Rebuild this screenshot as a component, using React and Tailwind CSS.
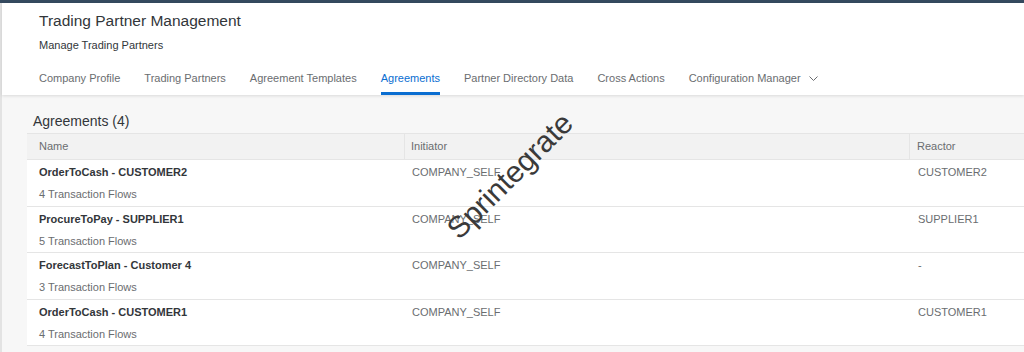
import React from 'react';

const tabs = [
  'Company Profile',
  'Trading Partners',
  'Agreement Templates',
  'Agreements',
  'Partner Directory Data',
  'Cross Actions',
  'Configuration Manager',
];

const agreements = [
  { name: 'OrderToCash - CUSTOMER2', flows: '4 Transaction Flows', initiator: 'COMPANY_SELF', reactor: 'CUSTOMER2' },
  { name: 'ProcureToPay - SUPPLIER1', flows: '5 Transaction Flows', initiator: 'COMPANY_SELF', reactor: 'SUPPLIER1' },
  { name: 'ForecastToPlan - Customer 4', flows: '3 Transaction Flows', initiator: 'COMPANY_SELF', reactor: '-' },
  { name: 'OrderToCash - CUSTOMER1', flows: '4 Transaction Flows', initiator: 'COMPANY_SELF', reactor: 'CUSTOMER1' },
];

function App() {
  return (
    <div className="relative w-[1024px] h-[352px] overflow-hidden bg-[#f7f7f7] font-['Liberation_Sans',Arial,sans-serif] text-[#32363a]">
      <div className="h-[3px] bg-[#354a5f]" />

      <div className="border-l-2 border-[#e3e3e3] h-[349px]">
        {/* Header */}
        <div className="bg-white pl-[37px] pt-[8px] shadow-[0_1px_3px_rgba(0,0,0,0.12)] relative z-10">
          <h1 className="text-[15.5px] leading-[20px] text-[#32363a]">Trading Partner Management</h1>
          <p className="mt-[7px] text-[11px] leading-[14px] text-[#32363a]">Manage Trading Partners</p>
          <nav className="mt-[12px] flex gap-[24px]">
            {tabs.map((t) => {
              const active = t === 'Agreements';
              return (
                <div
                  key={t}
                  className={
                    'h-[31px] flex items-center text-[11px] border-b-[3px] ' +
                    (active ? 'border-[#0a6ed1] text-[#0a6ed1]' : 'border-transparent text-[#6a6d70]')
                  }
                >
                  {t}
                  {t === 'Configuration Manager' && (
                    <svg className="ml-[8px]" width="9" height="5" viewBox="0 0 9 5" fill="none">
                      <path d="M0.5 0.5 L4.5 4.5 L8.5 0.5" stroke="#6a6d70" strokeWidth="1" />
                    </svg>
                  )}
                </div>
              );
            })}
          </nav>
        </div>

        {/* Content */}
        <div className="pl-[25px]">
          <h2 className="mt-[16px] pl-[6px] text-[14px] leading-[20px] text-[#32363a]">Agreements (4)</h2>
          <div className="mt-[2px] w-[1100px] border-t border-[#e5e5e5]">
            <div className="flex h-[26px] items-center bg-[#f2f2f2] border-b border-[#e5e5e5] text-[11px] text-[#6a6d70]">
              <div className="w-[378px] h-full flex items-center pl-3 border-r border-[#e5e5e5]">Name</div>
              <div className="w-[505px] h-full flex items-center pl-[6px] border-r border-[#e5e5e5]">Initiator</div>
              <div className="flex-1 h-full flex items-center pl-[7px]">Reactor</div>
            </div>
            {agreements.map((a, i) => (
              <div key={i} className="flex h-[46.5px] bg-white border-b border-[#e5e5e5] text-[11px]">
                <div className="w-[378px] pl-3 pt-[5px]">
                  <div className="font-bold leading-[14px] text-[#32363a]">{a.name}</div>
                  <div className="mt-[8px] leading-[14px] text-[#6a6d70]">{a.flows}</div>
                </div>
                <div className="w-[505px] pl-[7px] pt-[5px] leading-[14px] text-[#6a6d70]">{a.initiator}</div>
                <div className="flex-1 pl-[8px] pt-[5px] leading-[14px] text-[#6a6d70]">{a.reactor}</div>
              </div>
            ))}
          </div>
        </div>
      </div>

      {/* Watermark */}
      <div className="absolute left-[510px] top-[176px] -translate-x-1/2 -translate-y-1/2 -rotate-45 text-[30px] leading-none text-[#3a3a3a] whitespace-nowrap pointer-events-none z-20">
        Sprintegrate
      </div>
    </div>
  );
}

export default App;
